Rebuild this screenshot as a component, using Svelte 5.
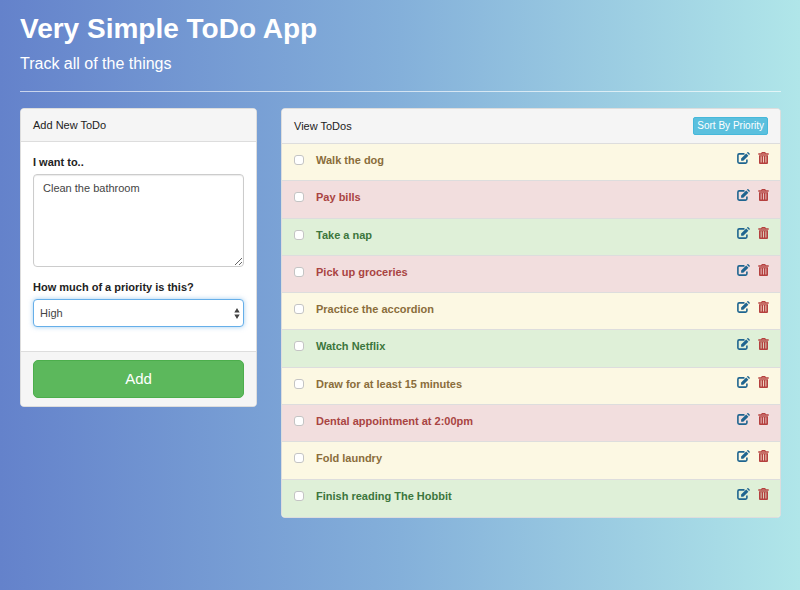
<script>
  let draft = $state('Clean the bathroom');
  let priority = $state('high');
  let sorted = $state(false);
  let editing = $state(null);
  let nextId = 11;

  const rank = { high: 0, medium: 1, low: 2 };

  let todos = $state([
    { id: 1, text: 'Walk the dog', priority: 'medium', done: false },
    { id: 2, text: 'Pay bills', priority: 'high', done: false },
    { id: 3, text: 'Take a nap', priority: 'low', done: false },
    { id: 4, text: 'Pick up groceries', priority: 'high', done: false },
    { id: 5, text: 'Practice the accordion', priority: 'medium', done: false },
    { id: 6, text: 'Watch Netflix', priority: 'low', done: false },
    { id: 7, text: 'Draw for at least 15 minutes', priority: 'medium', done: false },
    { id: 8, text: 'Dental appointment at 2:00pm', priority: 'high', done: false },
    { id: 9, text: 'Fold laundry', priority: 'medium', done: false },
    { id: 10, text: 'Finish reading The Hobbit', priority: 'low', done: false }
  ]);

  let visible = $derived(
    sorted ? [...todos].sort((a, b) => rank[a.priority] - rank[b.priority]) : todos
  );

  function save(event) {
    event.preventDefault();
    const text = draft.trim();
    if (!text) return;
    if (editing !== null) {
      todos = todos.map((t) => (t.id === editing ? { ...t, text, priority } : t));
      editing = null;
    } else {
      todos = [...todos, { id: nextId++, text, priority, done: false }];
    }
    draft = '';
  }

  function edit(todo) {
    editing = todo.id;
    draft = todo.text;
    priority = todo.priority;
  }

  function remove(id) {
    todos = todos.filter((t) => t.id !== id);
  }
</script>

<div class="page">
  <header>
    <h1>Very Simple ToDo App</h1>
    <p>Track all of the things</p>
  </header>

  <main>
    <form class="panel" onsubmit={save}>
      <h2 class="heading">Add New ToDo</h2>
      <div class="body">
        <label for="todo-text">I want to..</label>
        <textarea id="todo-text" rows="5" bind:value={draft}></textarea>
        <label for="todo-priority">How much of a priority is this?</label>
        <div class="select">
          <select id="todo-priority" bind:value={priority}>
            <option value="high">High</option>
            <option value="medium">Medium</option>
            <option value="low">Low</option>
          </select>
          <svg viewBox="0 0 6 11" width="6" height="11" aria-hidden="true">
            <path d="M3 0 5.700 4.500H0.300zM3 11 0.300 6.500H5.700z" fill="#444" />
          </svg>
        </div>
      </div>
      <div class="footer">
        <button class="add" type="submit">Add</button>
      </div>
    </form>

    <section class="panel">
      <div class="heading wide">
        <h2>View ToDos</h2>
        <button class="sort" type="button" onclick={() => (sorted = !sorted)}>Sort By Priority</button>
      </div>
      <ul>
        {#each visible as todo (todo.id)}
          <li class={todo.priority}>
            <label class:done={todo.done}>
              <input type="checkbox" bind:checked={todo.done} />
              <span>{todo.text}</span>
            </label>
            <div class="actions">
              <button class="edit" type="button" aria-label="Edit {todo.text}" onclick={() => edit(todo)}>
                <svg viewBox="0 0 13 12" width="13" height="12" aria-hidden="true">
                  <path
                    d="M7.500 1.900H2.200Q0.900 1.900 0.900 3.200V9.800Q0.900 11.100 2.200 11.100H8.600Q9.900 11.100 9.900 9.800V7.600"
                    fill="none"
                    stroke="currentColor"
                    stroke-width="1.600"
                  />
                  <path
                    d="M9.200 1.500 11.400 3.700 6.300 8.800H4.100V6.600zM9.900 0.800 10.400 0.300Q10.900-0.200 11.400 0.300L12.600 1.500Q13.100 2 12.600 2.500L12.100 3z"
                    fill="currentColor"
                  />
                </svg>
              </button>
              <button class="delete" type="button" aria-label="Delete {todo.text}" onclick={() => remove(todo.id)}>
                <svg viewBox="0 0 11 12" width="11" height="12" aria-hidden="true">
                  <path
                    fill="currentColor"
                    fill-rule="evenodd"
                    d="M0.300 1.300H3.300V1Q3.300 0 4.300 0H6.700Q7.700 0 7.700 1V1.300H10.700V2.700H0.300zM4.200 1.300H6.800V0.900H4.200zM1 3.200H10V11Q10 12 9 12H2Q1 12 1 11zM2.700 4.300V10.500H3.500V4.300zM5.100 4.300V10.500H5.900V4.300zM7.500 4.300V10.500H8.300V4.300z"
                  />
                </svg>
              </button>
            </div>
          </li>
        {/each}
      </ul>
    </section>
  </main>
</div>

<style>
  .page {
    box-sizing: border-box;
    min-height: 100vh;
    padding: 12px 19px 24px 20px;
    background: linear-gradient(to right, #6482cb, #84b0da 50%, #b0e6e9);
    color: #222;
    font: 11px/16px "Liberation Sans", Arial, sans-serif;
  }
  .page :global(*) {
    box-sizing: border-box;
  }
  header {
    margin-bottom: 16px;
    padding-bottom: 17px;
    border-bottom: 1px solid rgba(255, 255, 255, 0.65);
    color: #fff;
  }
  h1 {
    margin: 0;
    font-size: 28px;
    line-height: 34px;
  }
  header p {
    margin: 8px 0 0;
    font-size: 16px;
    line-height: 20px;
  }
  main {
    display: grid;
    grid-template-columns: minmax(0, 237fr) minmax(0, 500fr);
    gap: 24px;
    align-items: start;
  }
  .panel {
    overflow: hidden;
    border: 1px solid #ddd;
    border-radius: 4px;
    background: #fff;
  }
  h2 {
    margin: 0;
    font-size: inherit;
    font-weight: normal;
  }
  .heading {
    padding: 8px 12px;
    border-bottom: 1px solid #ddd;
    background: #f5f5f5;
  }
  .wide {
    display: flex;
    justify-content: space-between;
    align-items: center;
  }
  .body {
    padding: 12px 12px 24px;
  }
  .body label {
    display: block;
    margin-bottom: 4px;
    font-weight: bold;
  }
  textarea,
  select {
    display: block;
    width: 100%;
    border: 1px solid #ccc;
    border-radius: 4px;
    background: #fff;
    color: #444;
    font: inherit;
  }
  textarea {
    height: 93px;
    margin-bottom: 12px;
    padding: 5px 9px;
    box-shadow: inset 0 1px 1px rgba(0, 0, 0, 0.08);
    resize: vertical;
  }
  .select {
    position: relative;
  }
  select {
    height: 28px;
    padding: 0 20px 0 6px;
    border-color: #66afe9;
    box-shadow: 0 0 5px rgba(102, 175, 233, 0.6);
    appearance: none;
  }
  .select svg {
    position: absolute;
    top: 9px;
    right: 4px;
    pointer-events: none;
  }
  .footer {
    padding: 8px 12px;
    border-top: 1px solid #ddd;
    background: #f5f5f5;
  }
  button {
    margin: 0;
    padding: 0;
    border: 0;
    background: none;
    font: inherit;
    cursor: pointer;
  }
  .add {
    display: block;
    width: 100%;
    padding: 8px;
    border: 1px solid #4cae4c;
    border-radius: 5px;
    background: #5cb85c;
    color: #fff;
    font-size: 15px;
    line-height: 20px;
  }
  .sort {
    padding: 0 3px;
    border: 1px solid #46b8da;
    border-radius: 2px;
    background: #5bc0de;
    color: #fff;
    font-size: 10px;
  }
  ul {
    display: grid;
    grid-auto-rows: 1fr;
    min-height: 373px;
    margin: 0;
    padding: 0;
    list-style: none;
  }
  li {
    display: flex;
    justify-content: space-between;
    align-items: start;
    padding: 8px 11px 8px 12px;
    border-bottom: 1px solid #ddd;
  }
  li:last-child {
    border-bottom: 0;
  }
  li label {
    display: flex;
    align-items: center;
    gap: 12px;
    font-weight: bold;
  }
  .done span {
    text-decoration: line-through;
  }
  input {
    width: 10px;
    height: 10px;
    margin: 0;
    border: 1px solid #c4c4c4;
    border-radius: 3px;
    background: #fff;
    appearance: none;
  }
  input:checked {
    background: #337ab7;
  }
  .medium {
    background: #fcf8e3;
    color: #8a6d3b;
  }
  .high {
    background: #f2dede;
    color: #a94442;
  }
  .low {
    background: #dff0d8;
    color: #3c763d;
  }
  .actions {
    display: flex;
    gap: 8px;
  }
  .actions svg {
    display: block;
  }
  .edit {
    color: #1f6590;
  }
  .delete {
    color: #b5403e;
  }
</style>
